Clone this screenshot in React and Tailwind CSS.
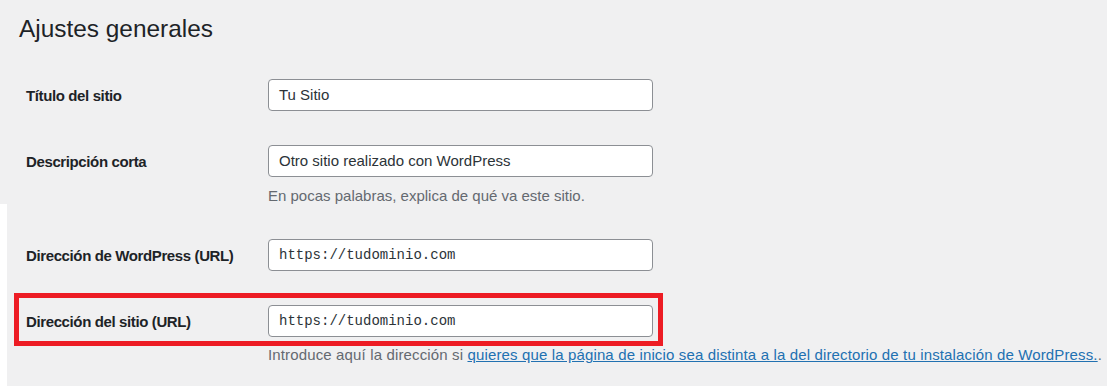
import React from "react";

const FONT = { fontFamily: '"Liberation Sans", Arial, sans-serif' };

function Field({ value, mono }) {
  return (
    <div
      className={`flex items-center h-[32px] w-[385px] bg-white border border-[#8c8f94] rounded-[4px] px-[10px] text-[#2c3338] ${
        mono ? "font-['Liberation_Mono',monospace] text-[14px]" : "text-[15px]"
      }`}
    >
      {value}
    </div>
  );
}

function Row({ label, value, mono, className = "" }) {
  return (
    <div className={`flex items-start ${className}`}>
      <div className="w-[242px] shrink-0 pt-[7px] text-[15px] leading-[20px] font-semibold tracking-[-0.38px] text-[#1d2327]">
        {label}
      </div>
      <Field value={value} mono={mono} />
    </div>
  );
}

export default function App() {
  return (
    <div className="w-[1107px] h-[386px] bg-[#f0f0f1] overflow-hidden" style={FONT}>
      {/* top part */}
      <div className="h-[204px] pl-[19px] pt-[14px]">
        <h1 className="text-[24.4px] leading-[30px] font-normal text-[#1d2327]">Ajustes generales</h1>
        <div className="pl-[7px]">
          <Row className="mt-[35px]" label="Título del sitio" value="Tu Sitio" />
          <Row className="mt-[34px]" label="Descripción corta" value="Otro sitio realizado con WordPress" />
          <p className="ml-[242px] mt-[10px] text-[15px] leading-[18px] text-[#646970]">
            En pocas palabras, explica de qué va este sitio.
          </p>
        </div>
      </div>

      {/* bottom part */}
      <div className="flex h-[182px]">
        <div className="w-[7px] shrink-0 bg-white" />
        <div className="flex-1">
          <Row className="mt-[35px] ml-[19px]" label="Dirección de WordPress (URL)" value="https://tudominio.com" mono />
          <div className="mt-[22px] ml-[7px] w-[649px] border-[5px] border-[#ed1c24] pl-[7px] pt-[7px] pb-[4px]">
            <Row label="Dirección del sitio (URL)" value="https://tudominio.com" mono />
          </div>
          <p className="ml-[261px] text-[15px] leading-[18px] tracking-[0.14px] text-[#646970] whitespace-nowrap">
            Introduce aquí la dirección si{" "}
            <a href="#" className="text-[#2271b1] underline">
              quieres que la página de inicio sea distinta a la del directorio de tu instalación de WordPress.
            </a>
            .
          </p>
        </div>
      </div>
    </div>
  );
}
